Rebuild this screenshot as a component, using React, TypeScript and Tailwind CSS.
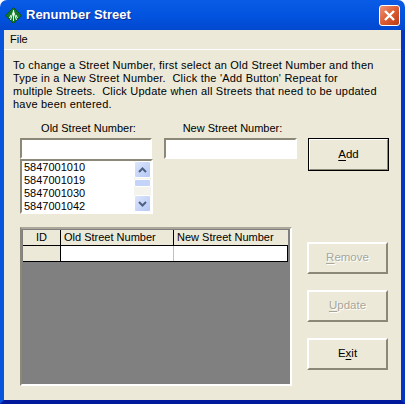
function Icon() {
  return (
    <svg width="17" height="17" viewBox="0 0 17 17" className="shrink-0">
      <path d="M8.5 0.5 L16.5 8.5 L8.5 16.5 L0.5 8.5 Z" fill="#0f7a2a" stroke="#0a4f24" />
      <path d="M8.5 3 V14 M8.5 4 L5.5 13 M8.5 4 L11.5 13 M6 8 L4.5 11 M11 8 L12.5 11" stroke="#f2fff2" strokeWidth="1" fill="none" />
    </svg>
  )
}

function CloseButton() {
  return (
    <div className="flex h-[21px] w-[21px] items-center justify-center rounded-[3px] border border-white bg-gradient-to-br from-[#ec9274] via-[#dc5c32] to-[#bd3a12]">
      <svg width="13" height="13" viewBox="0 0 13 13">
        <path d="M2 2 L11 11 M11 2 L2 11" stroke="#fff" strokeWidth="2.4" />
      </svg>
    </div>
  )
}

function Sunken({ className }: { className: string }) {
  return <div className={`border-2 border-t-[#8b8878] border-l-[#8b8878] border-r-white border-b-white bg-white ${className}`} />
}

function Arrow({ up }: { up?: boolean }) {
  return (
    <div className="flex h-[17px] w-[17px] items-center justify-center rounded-[2px] border border-white bg-gradient-to-br from-[#dde6fb] to-[#b4c8f6]">
      <svg width="9" height="6" viewBox="0 0 9 6">
        <path d={up ? 'M1 5 L4.5 1.5 L8 5' : 'M1 1 L4.5 4.5 L8 1'} stroke="#4d6185" strokeWidth="2" fill="none" />
      </svg>
    </div>
  )
}

function Button({ mnemonic, rest, first = '', disabled, primary, className = '' }: {
  mnemonic: string
  rest: string
  first?: string
  disabled?: boolean
  primary?: boolean
  className?: string
}) {
  return (
    <div
      className={`flex w-[81px] items-center justify-center border-2 border-t-white border-l-white border-r-[#8b8878] border-b-[#8b8878] text-[11.5px] ${primary ? 'h-[33px] outline outline-1 -outline-offset-1 outline-black' : 'h-[32px]'} ${disabled ? 'text-[#a7a69a] [text-shadow:1px_1px_0_#fff]' : 'text-black'} ${className}`}
    >
      {first}
      <span className="underline underline-offset-2">{mnemonic}</span>
      {rest}
    </div>
  )
}

const streets = ['5847001010', '5847001019', '5847001030', '5847001042']

export default function App() {
  return (
    <div className="flex h-[404px] w-[405px] flex-col overflow-hidden rounded-t-[7px] font-['Liberation_Sans',sans-serif] text-black">
      {/* Title bar */}
      <div className="flex h-[30px] shrink-0 items-center bg-gradient-to-b from-[#0a5be6] via-[#0254e0] to-[#0348cf] pl-[5px] pr-[5px]">
        <Icon />
        <span className="ml-[4px] text-[13px] font-bold text-white [text-shadow:1px_1px_0_#0a2a90]">Renumber Street</span>
        <div className="ml-auto">
          <CloseButton />
        </div>
      </div>

      <div className="flex flex-1 flex-col border-x-4 border-b-4 border-l-[#0855dd] border-r-[#0735bd] border-b-[#00189a] bg-[#ece9d8]">
        {/* Menu */}
        <div className="flex h-[20px] shrink-0 items-center border-b border-white pl-[6px] text-[11px]">File</div>

        <div className="flex flex-1 flex-col pl-[9px]">
          <p className="mt-[9px] text-[11px] leading-[13px] tracking-[0.22px] whitespace-pre">
            {"To change a Street Number, first select an Old Street Number and then\nType in a New Street Number.  Click the 'Add Button' Repeat for\nmultiple Streets.  Click Update when all Streets that need to be updated\nhave been entered."}
          </p>

          <div className="mt-[9px] flex pl-[7px]">
            {/* Old number */}
            <div className="flex w-[133px] flex-col">
              <div className="h-[18px] pl-[4px] text-center text-[11px] leading-[16px]">Old Street Number:</div>
              <Sunken className="h-[21px] w-[132px]" />
              <div className="flex h-[55px] border-2 border-t-[#8b8878] border-l-[#8b8878] border-r-white border-b-white bg-white">
                <div className="flex-1 pl-[2px] text-[11px] leading-[13px]">
                  {streets.map((s) => (
                    <div key={s}>{s}</div>
                  ))}
                </div>
                <div className="flex w-[17px] flex-col justify-between bg-[#f4f3ee]">
                  <Arrow up />
                  <div className="mt-[1px] h-[8px] rounded-[2px] border border-white bg-[#c3d3fa]" />
                  <div className="flex-1" />
                  <Arrow />
                </div>
              </div>
            </div>

            {/* New number */}
            <div className="ml-[11px] flex w-[133px] flex-col">
              <div className="h-[18px] pl-[4px] text-center text-[11px] leading-[16px]">New Street Number:</div>
              <Sunken className="h-[21px] w-[133px]" />
            </div>

            <Button primary first="" mnemonic="A" rest="dd" className="ml-[11px] mt-[18px]" />
          </div>

          <div className="mt-[13px] flex pl-[7px]">
            {/* Grid */}
            <div className="h-[159px] w-[272px] border-2 border-t-[#aca899] border-l-[#8b8878] border-r-white border-b-white bg-[#808080] pl-[1px] pt-[1px]">
              <div className="flex h-[16px] w-[265px] border-b border-black bg-[#ece9d8] text-[11px] leading-[15px]">
                <div className="w-[38px] border-r border-black text-center">ID</div>
                <div className="w-[113px] border-r border-black pl-[3px]">Old Street Number</div>
                <div className="flex-1 pl-[3px]">New Street Number</div>
              </div>
              <div className="flex h-[16px] w-[265px] border-r border-b border-black bg-white">
                <div className="w-[38px] border-r border-black bg-[#ece9d8]" />
                <div className="w-[113px] border-r border-[#c0c0c0]" />
              </div>
            </div>

            <div className="ml-[15px] mt-[15px] flex flex-col gap-[16px]">
              <Button disabled mnemonic="R" rest="emove" />
              <Button disabled mnemonic="U" rest="pdate" />
              <Button first="E" mnemonic="x" rest="it" />
            </div>
          </div>
        </div>
      </div>
    </div>
  )
}
